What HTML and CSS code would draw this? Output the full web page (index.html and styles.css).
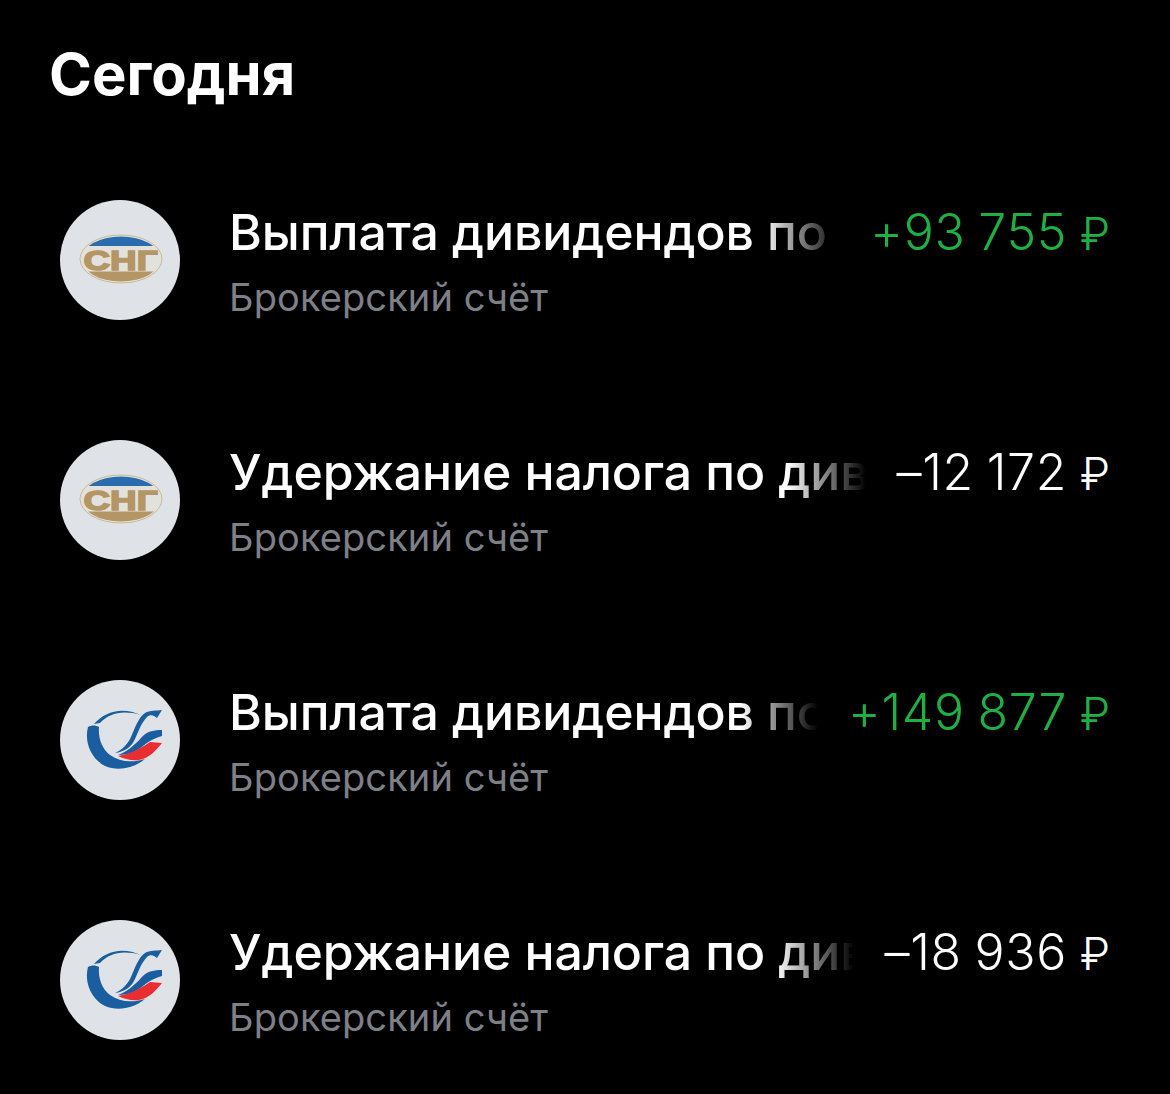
FILE: index.html
```html
<!DOCTYPE html>
<html lang="ru">
<head>
<meta charset="utf-8">
<title>Сегодня</title>
<link rel="stylesheet" href="styles.css">
</head>
<body>
<svg class="defs" width="0" height="0" aria-hidden="true">
  <defs>
    <clipPath id="oval"><ellipse cx="61" cy="59" rx="39.5" ry="22.5"/></clipPath>
    <symbol id="sng" viewBox="0 0 120 120">
      <ellipse cx="61" cy="59" rx="41" ry="24" fill="#e2e2dc" stroke="#c9b893" stroke-width="1"/>
      <g clip-path="url(#oval)">
        <rect x="20" y="30" width="82" height="16" fill="#2a6cae"/>
        <rect x="20" y="71.5" width="82" height="14" fill="#b49566"/>
      </g>
      <text class="sng-text" x="60.5" y="70" text-anchor="middle" textLength="74" lengthAdjust="spacingAndGlyphs">СНГ</text>
    </symbol>
    <symbol id="swoosh" viewBox="0 0 120 120">
      <path d="M34 44C44 32 62 26 81 35C62 30 50 33 40 43Z" fill="#1b5e9f"/>
      <path d="M28 47C24 62 31 79 45 86C57 91 73 89 85 79C72 83 60 82 50 75C42 69 38 58 39 47C35 45 32 45 28 47Z" fill="#1b5e9f"/>
      <path d="M102 30L97 38C94 35 90 34 87 37C81 43 78 53 74 61C71 67 64 72 55 73C62 70 68 64 71 57C75 48 78 38 85 33C90 30 96 31 102 30Z" fill="#1b5e9f"/>
      <path d="M102 50C92 50 86 52 81 58C74 66 66 72 58 75C70 75 77 71 83 66C90 60 96 58 102 56Z" fill="#1b5e9f"/>
      <path d="M102 63L90 62C82 67 74 73 58 76C64 79 72 81 79 80C90 78 96 70 102 63Z" fill="#ea2d33"/>
    </symbol>
  </defs>
</svg>
<main class="screen">
  <h1 class="heading">Сегодня</h1>
  <ul class="list">
    <li class="row">
      <div class="avatar"><svg class="logo"><use href="#sng"/></svg></div>
      <div class="info">
        <div class="top"><span class="title">Выплата дивидендов по акциям</span><span class="amount plus">+93 755 <span class="rub">₽</span></span></div>
        <div class="sub">Брокерский счёт</div>
      </div>
    </li>
    <li class="row">
      <div class="avatar"><svg class="logo"><use href="#sng"/></svg></div>
      <div class="info">
        <div class="top"><span class="title">Удержание налога по дивидендам</span><span class="amount">–12 172 <span class="rub">₽</span></span></div>
        <div class="sub">Брокерский счёт</div>
      </div>
    </li>
    <li class="row">
      <div class="avatar"><svg class="logo"><use href="#swoosh"/></svg></div>
      <div class="info">
        <div class="top"><span class="title">Выплата дивидендов по акциям</span><span class="amount plus">+149 877 <span class="rub">₽</span></span></div>
        <div class="sub">Брокерский счёт</div>
      </div>
    </li>
    <li class="row">
      <div class="avatar"><svg class="logo"><use href="#swoosh"/></svg></div>
      <div class="info">
        <div class="top"><span class="title">Удержание налога по дивидендам</span><span class="amount">–18 936 <span class="rub">₽</span></span></div>
        <div class="sub">Брокерский счёт</div>
      </div>
    </li>
  </ul>
</main>
</body>
</html>
```
FILE: styles.css
```css
* { box-sizing: border-box; }
html, body { margin: 0; background: #000; }
body { font-family: Inter, "Liberation Sans", sans-serif; color: #fff; width: 1170px; height: 1094px; overflow: hidden; }
.defs { display: block; height: 0; }
.screen { padding: 41px 60px 0 49px; }
.heading { margin: 0; font-size: 58px; line-height: 66px; font-weight: 700; color: #fff; }
.list { list-style: none; margin: 93px 0 0; padding: 0 0 0 11px; display: flex; flex-direction: column; gap: 120px; }
.row { display: flex; align-items: center; gap: 49px; height: 120px; }
.avatar { flex: none; width: 120px; height: 120px; border-radius: 50%; background: #dfe3e8; overflow: hidden; }
.logo { display: block; width: 120px; height: 120px; }
.sng-text { font-family: "Liberation Sans", sans-serif; font-weight: 700; font-size: 28.5px; fill: #b49566; stroke: #b49566; stroke-width: 1.6px; }
.info { flex: 1; min-width: 0; display: flex; flex-direction: column; gap: 14px; padding-top: 2px; }
.top { display: flex; align-items: center; gap: 24px; height: 58px; }
.title { flex: 1; min-width: 0; white-space: nowrap; overflow: hidden; font-size: 50px; line-height: 58px; font-weight: 550; letter-spacing: -0.1px;
  -webkit-mask-image: linear-gradient(to right, #000 calc(100% - 84px), transparent calc(100% - 6px));
  mask-image: linear-gradient(to right, #000 calc(100% - 84px), transparent calc(100% - 6px)); }
.amount { flex: none; padding-top: 1px; font-size: 50px; line-height: 58px; font-weight: 350; letter-spacing: 0.7px; word-spacing: -2px; color: #fff; }
.amount.plus { color: #1fb044; }
.rub { font-size: 45px; letter-spacing: 0; }
.sub { font-size: 38px; line-height: 44px; font-weight: 400; color: #7e8087; letter-spacing: 0.1px; }
```
